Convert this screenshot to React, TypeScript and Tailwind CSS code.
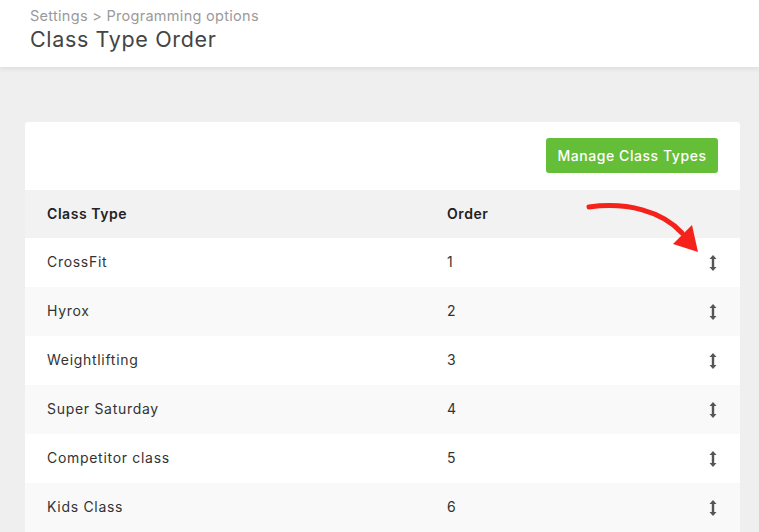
import React from "react";

const rows = [
  { name: "CrossFit", order: 1 },
  { name: "Hyrox", order: 2 },
  { name: "Weightlifting", order: 3 },
  { name: "Super Saturday", order: 4 },
  { name: "Competitor class", order: 5 },
  { name: "Kids Class", order: 6 },
];

function SortHandle() {
  return (
    <svg width="8" height="16" viewBox="0 0 8 16" className="block">
      <path d="M4 0 L7.5 4 L5.2 4 L5.2 12 L7.5 12 L4 16 L0.5 12 L2.8 12 L2.8 4 L0.5 4 Z" fill="#555" />
    </svg>
  );
}

export default function App() {
  return (
    <div
      className="min-h-[532px] w-full bg-[#efefef]"
      style={{ fontFamily: '"Inter", "Noto Sans", sans-serif' }}
    >
      <header className="h-[67px] bg-white pl-[30px] pt-[6px] shadow-[0_2px_5px_rgba(0,0,0,0.08)]">
        <div className="text-[14.5px] leading-[20px] tracking-[0.02em] text-[#9a9a9a]">Settings &gt; Programming options</div>
        <h1 className="-mt-[1px] text-[21.5px] leading-[28px] tracking-[0.03em] text-[#444]">Class Type Order</h1>
      </header>

      <main className="pl-[25px] pr-[19px] pt-[55px]">
        <div className="relative rounded-[3px] bg-white pt-[16px]">
          <div className="flex justify-end pr-[22px]">
            <button className="h-[35px] w-[172px] rounded-[3px] bg-[#64be38] pb-[1px] text-[14px] font-medium tracking-[0.04em] text-white">
              Manage Class Types
            </button>
          </div>

          <div className="mt-[17px]">
            <div className="grid h-[48px] grid-cols-[422px_1fr_auto] items-center bg-[#f2f2f2] pb-[2px] text-[14px] font-semibold tracking-[0.04em] text-[#222]">
              <div className="pl-[22px]">Class Type</div>
              <div>Order</div>
              <div />
            </div>
            {rows.map((r, i) => (
              <div
                key={r.name}
                className={`grid h-[49px] grid-cols-[422px_1fr_auto] items-center text-[14px] tracking-[0.05em] text-[#333] ${
                  i % 2 === 1 ? "bg-[#f9f9f9]" : "bg-white"
                }`}
              >
                <div className="pb-[2px] pl-[22px]">{r.name}</div>
                <div className="pb-[2px]">{r.order}</div>
                <div className="pr-[23px]">
                  <SortHandle />
                </div>
              </div>
            ))}
          </div>

          {/* callout arrow pointing at the drag handle */}
          <svg
            className="pointer-events-none absolute left-[532px] top-[75px]"
            width="150"
            height="60"
            viewBox="0 0 150 60"
          >
            <path d="M32 10 C70 5 105 14 125 36" fill="none" stroke="#f5221b" strokeWidth="5" strokeLinecap="round" />
            <path d="M116 47 L135 28 L141 55 Z" fill="#f5221b" />
          </svg>
        </div>
      </main>
    </div>
  );
}
